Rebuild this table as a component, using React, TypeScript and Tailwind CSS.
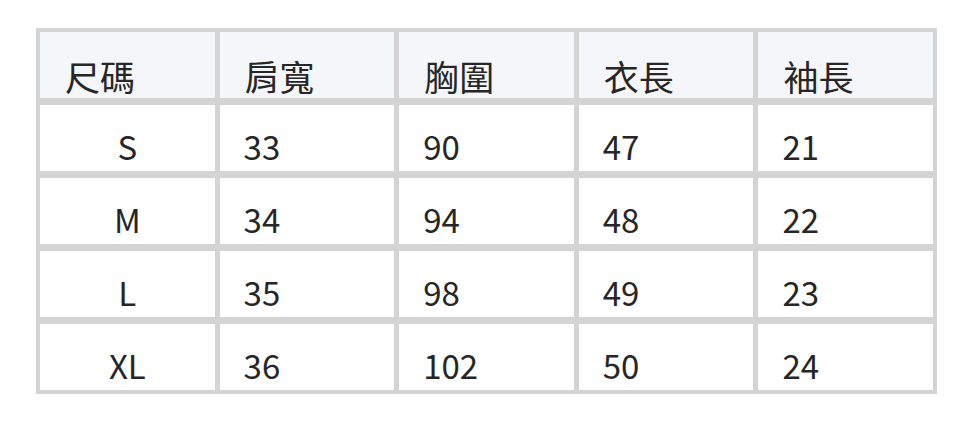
import React from 'react';

const headers = ['尺碼', '肩寬', '胸圍', '衣長', '袖長'];

const rows = [
  ['S', '33', '90', '47', '21'],
  ['M', '34', '94', '48', '22'],
  ['L', '35', '98', '49', '23'],
  ['XL', '36', '102', '50', '24'],
];

export default function App() {
  return (
    <div className="w-[972px] h-[422px] bg-white pt-[28px] pl-[36px] text-[#262626] font-['Noto_Sans_CJK_TC','Noto_Sans_CJK_SC',sans-serif]">
      <div className="w-[901px] bg-[#d4d4d4] p-[4px] grid grid-cols-5 gap-x-[5px] gap-y-[7px]">
        {headers.map((h) => (
          <div key={h} className="h-[66px] bg-[#f5f6fa] flex items-end pl-[25px] pb-[5px] text-[35px] leading-none">
            {h}
          </div>
        ))}
        {rows.map((row) =>
          row.map((cell, i) => (
            <div
              key={row[0] + i}
              className={`h-[66px] bg-white flex items-end pb-[8px] text-[33px] leading-none ${
                i === 0 ? 'justify-center' : 'pl-[24px]'
              }`}
            >
              {cell}
            </div>
          ))
        )}
      </div>
    </div>
  );
}
